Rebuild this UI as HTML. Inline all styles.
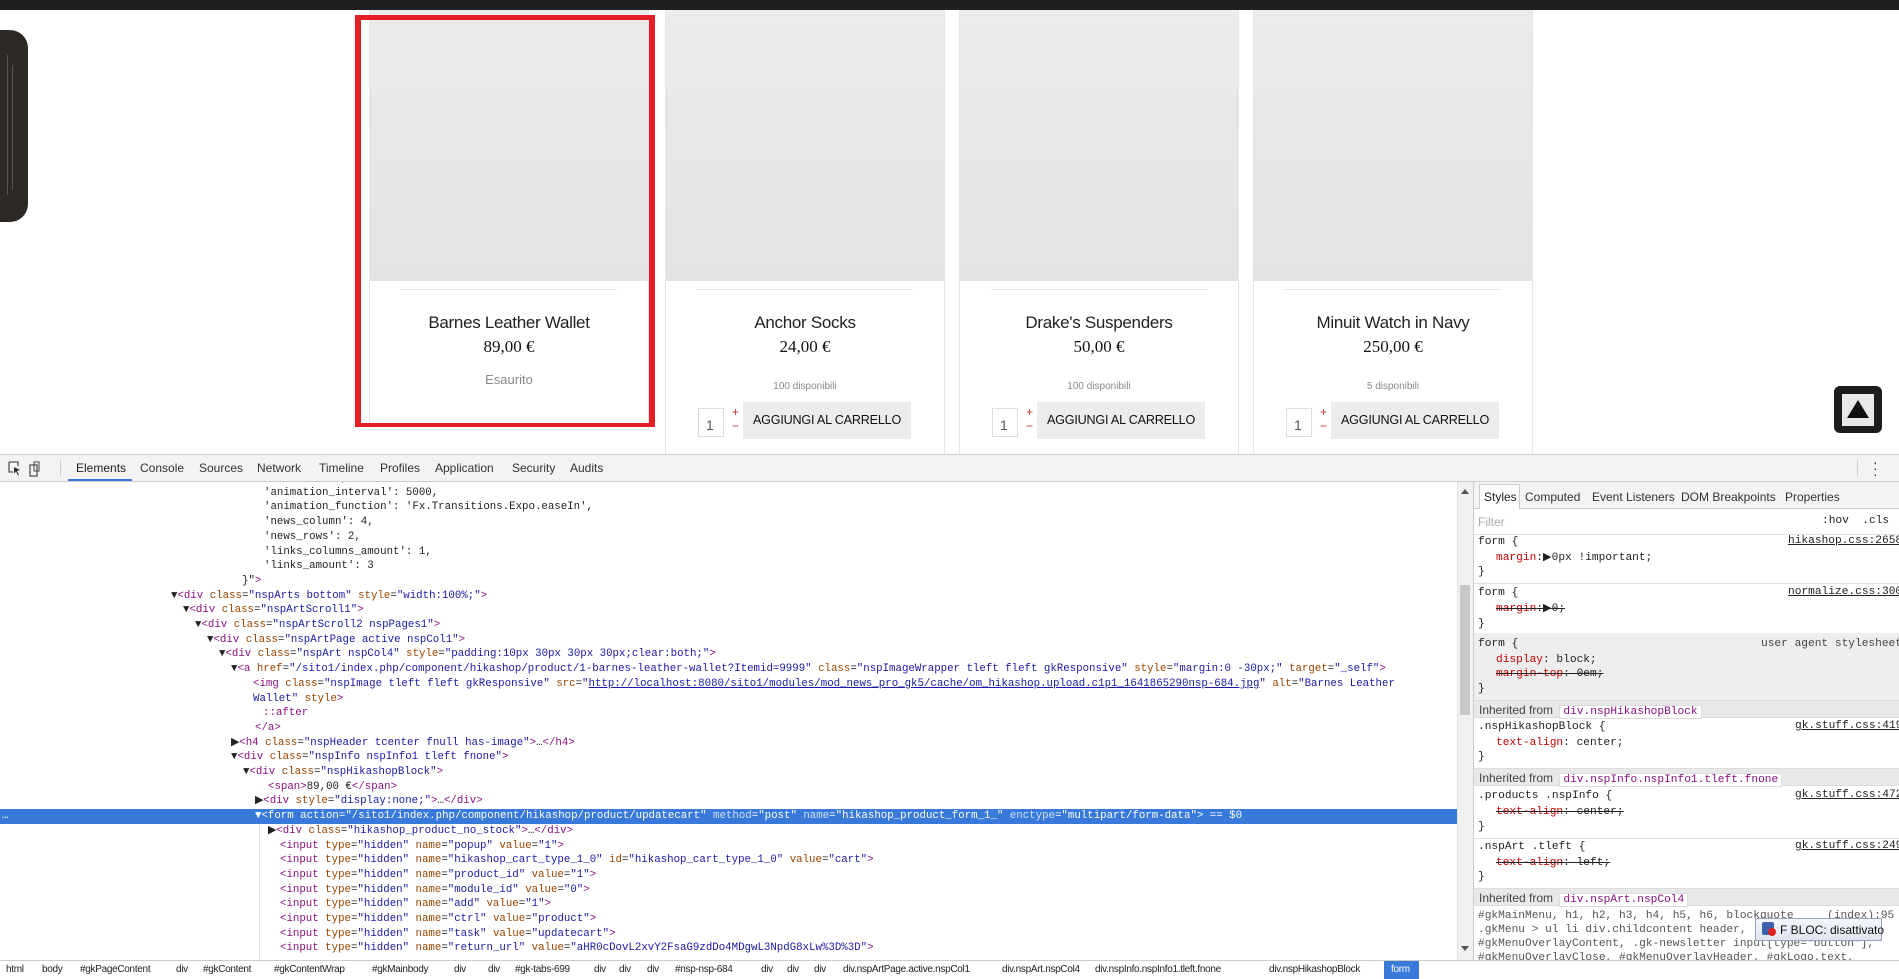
<!DOCTYPE html>
<html><head><meta charset="utf-8">
<style>
*{box-sizing:border-box;margin:0;padding:0}
body{width:1899px;height:979px;overflow:hidden;position:relative;background:#fff;font-family:"Liberation Sans",sans-serif}
.abs{position:absolute}
.card{position:absolute;top:10px;width:280px;height:420px;border:1px solid #e6e6e6;border-top:none;background:#fff}
.card .img{position:absolute;left:0;top:0;right:0;height:271px;background:linear-gradient(#ebebeb,#e3e3e3)}
.card .sep{position:absolute;left:31px;right:31px;top:279px;height:1px;background:#e3e3e3}
.card .ti{position:absolute;left:0;right:0;top:302px;text-align:center;font-family:"Liberation Sans Narrow","Liberation Sans",sans-serif;font-size:17px;color:#222;line-height:22px;letter-spacing:-0.3px}
.card .pr{position:absolute;left:0;right:0;top:326px;text-align:center;font-family:"Liberation Serif",serif;font-size:17px;color:#111;line-height:22px}
.card .st{position:absolute;left:0;right:0;top:371px;text-align:center;font-family:"Liberation Sans Narrow","Liberation Sans",sans-serif;font-size:10px;color:#888}
.qty{position:absolute;top:398px;width:26px;height:29px;border:1px solid #ddd;font-size:14px;color:#555;padding:8px 0 0 7px;background:#fff}
.pm{position:absolute;top:395px;color:#c33;font-size:12px;line-height:14px}
.btn{position:absolute;top:392px;width:168px;height:37px;background:#ececec;font-family:"Liberation Sans Narrow","Liberation Sans",sans-serif;font-size:12.6px;color:#111;text-align:center;line-height:37px;letter-spacing:-0.2px}
.code{position:absolute;left:0;top:0;font-family:"Liberation Mono",monospace;font-size:10.75px;white-space:pre;line-height:14.7px;color:#222}
.ln{position:absolute;height:14.7px;white-space:pre}
.t{color:#881280}.an{color:#994500}.av{color:#1a1aa6}.u{text-decoration:underline;color:#1a1aa6}
.tb{position:absolute;top:461px;font-size:12px;color:#333}
.rp{position:absolute;font-family:"Liberation Mono",monospace;font-size:11.2px;color:#222;white-space:pre;line-height:15px}
.red{color:#c80000}
.s{text-decoration:line-through}
.src{position:absolute;left:1788px;font-family:"Liberation Mono",monospace;font-size:11.2px;color:#222;text-decoration:underline;white-space:pre}
.inh{position:absolute;left:1474px;width:425px;height:18px;background:#e8e8e8;font-size:12px;color:#444;padding:2px 0 0 5px;border-top:1px solid #ddd;border-bottom:1px solid #ddd}
.inh b{font-weight:normal;font-family:"Liberation Mono",monospace;font-size:11.2px;color:#881280;background:#fff;border:1px solid #ddd;padding:0 3px;margin-left:3px}
.bc{position:absolute;top:964px;font-size:10px;color:#222;font-family:"Liberation Sans Narrow","Liberation Sans",sans-serif;letter-spacing:-0.3px;white-space:nowrap}
</style></head><body>
<div class="abs" style="left:0;top:0;width:1899px;height:10px;background:#1e1f21"></div>
<div class="abs" style="left:-12px;top:30px;width:40px;height:192px;background:#2d2a25;border-radius:0 18px 18px 0"></div>
<div class="abs" style="left:7px;top:55px;width:1px;height:140px;background:#555"></div>
<div class="abs" style="left:12px;top:65px;width:1px;height:125px;background:#555"></div>

<div class="card" style="left:369px"><div class="img"></div><div class="sep"></div><div class="ti">Barnes Leather Wallet</div><div class="pr">89,00 €</div><div class="st" style="top:362px;font-size:13px">Esaurito</div></div>
<div class="card" style="left:665px;height:460px"><div class="img"></div><div class="sep"></div><div class="ti">Anchor Socks</div><div class="pr">24,00 €</div><div class="st">100 disponibili</div>
<div class="qty" style="left:32px">1</div><div class="pm" style="left:66px">+<br>−</div><div class="btn" style="left:77px">AGGIUNGI AL CARRELLO</div></div>
<div class="card" style="left:959px;height:460px"><div class="img"></div><div class="sep"></div><div class="ti">Drake's Suspenders</div><div class="pr">50,00 €</div><div class="st">100 disponibili</div>
<div class="qty" style="left:32px">1</div><div class="pm" style="left:66px">+<br>−</div><div class="btn" style="left:77px">AGGIUNGI AL CARRELLO</div></div>
<div class="card" style="left:1253px;height:460px"><div class="img"></div><div class="sep"></div><div class="ti">Minuit Watch in Navy</div><div class="pr">250,00 €</div><div class="st">5 disponibili</div>
<div class="qty" style="left:32px">1</div><div class="pm" style="left:66px">+<br>−</div><div class="btn" style="left:77px">AGGIUNGI AL CARRELLO</div></div>
<div class="abs" style="left:355px;top:15px;width:300px;height:412px;border:5px solid #e31e25;border-width:5px 6px 4px 6px"></div>

<div class="abs" style="left:1834px;top:386px;width:48px;height:47px;background:#1c1c1c;border-radius:6px"></div>
<div class="abs" style="left:1842px;top:394px;width:32px;height:32px;background:#e8e8e8"></div>
<div class="abs" style="left:1847px;top:400px;width:0;height:0;border-left:11px solid transparent;border-right:11px solid transparent;border-bottom:18px solid #111"></div>

<!-- devtools code area -->
<div class="abs" style="left:0;top:482px;width:1457px;height:478px;background:#fff;overflow:hidden">
<div class="code" style="top:-11px">
<div class="ln" style="left:264px;top:0">'animation_speed': 400,</div>
<div class="ln" style="left:264px;top:14.7px">'animation_interval': 5000,</div>
<div class="ln" style="left:264px;top:29.4px">'animation_function': 'Fx.Transitions.Expo.easeIn',</div>
<div class="ln" style="left:264px;top:44.1px">'news_column': 4,</div>
<div class="ln" style="left:264px;top:58.8px">'news_rows': 2,</div>
<div class="ln" style="left:264px;top:73.5px">'links_columns_amount': 1,</div>
<div class="ln" style="left:264px;top:88.2px">'links_amount': 3</div>
<div class="ln" style="left:242px;top:102.9px">}"<span class="t">&gt;</span></div>
<div class="ln" style="left:171px;top:117.6px">▼<span class="t">&lt;div</span> <span class="an">class</span>=<span class="av">"nspArts bottom"</span> <span class="an">style</span>=<span class="av">"width:100%;"</span><span class="t">&gt;</span></div>
<div class="ln" style="left:183px;top:132.3px">▼<span class="t">&lt;div</span> <span class="an">class</span>=<span class="av">"nspArtScroll1"</span><span class="t">&gt;</span></div>
<div class="ln" style="left:195px;top:147px">▼<span class="t">&lt;div</span> <span class="an">class</span>=<span class="av">"nspArtScroll2 nspPages1"</span><span class="t">&gt;</span></div>
<div class="ln" style="left:207px;top:161.7px">▼<span class="t">&lt;div</span> <span class="an">class</span>=<span class="av">"nspArtPage active nspCol1"</span><span class="t">&gt;</span></div>
<div class="ln" style="left:219px;top:176.4px">▼<span class="t">&lt;div</span> <span class="an">class</span>=<span class="av">"nspArt nspCol4"</span> <span class="an">style</span>=<span class="av">"padding:10px 30px 30px 30px;clear:both;"</span><span class="t">&gt;</span></div>
<div class="ln" style="left:231px;top:191.1px">▼<span class="t">&lt;a</span> <span class="an">href</span>=<span class="av">"/sito1/index.php/component/hikashop/product/1-barnes-leather-wallet?Itemid=9999"</span> <span class="an">class</span>=<span class="av">"nspImageWrapper tleft fleft gkResponsive"</span> <span class="an">style</span>=<span class="av">"margin:0 -30px;"</span> <span class="an">target</span>=<span class="av">"_self"</span><span class="t">&gt;</span></div>
<div class="ln" style="left:253px;top:205.8px"><span class="t">&lt;img</span> <span class="an">class</span>=<span class="av">"nspImage tleft fleft gkResponsive"</span> <span class="an">src</span>=<span class="av">"</span><span class="u">http://localhost:8080/sito1/modules/mod_news_pro_gk5/cache/om_hikashop.upload.c1p1_1641865290nsp-684.jpg</span><span class="av">"</span> <span class="an">alt</span>=<span class="av">"Barnes Leather</span></div>
<div class="ln" style="left:253px;top:220.5px"><span class="av">Wallet"</span> <span class="an">style</span><span class="t">&gt;</span></div>
<div class="ln" style="left:263px;top:235.2px"><span class="t">::after</span></div>
<div class="ln" style="left:255px;top:249.9px"><span class="t">&lt;/a&gt;</span></div>
<div class="ln" style="left:231px;top:264.6px">▶<span class="t">&lt;h4</span> <span class="an">class</span>=<span class="av">"nspHeader tcenter fnull has-image"</span><span class="t">&gt;</span>…<span class="t">&lt;/h4&gt;</span></div>
<div class="ln" style="left:231px;top:279.3px">▼<span class="t">&lt;div</span> <span class="an">class</span>=<span class="av">"nspInfo nspInfo1 tleft fnone"</span><span class="t">&gt;</span></div>
<div class="ln" style="left:243px;top:294px">▼<span class="t">&lt;div</span> <span class="an">class</span>=<span class="av">"nspHikashopBlock"</span><span class="t">&gt;</span></div>
<div class="ln" style="left:268px;top:308.7px"><span class="t">&lt;span&gt;</span>89,00 €<span class="t">&lt;/span&gt;</span></div>
<div class="ln" style="left:255px;top:323.4px">▶<span class="t">&lt;div</span> <span class="an">style</span>=<span class="av">"display:none;"</span><span class="t">&gt;</span>…<span class="t">&lt;/div&gt;</span></div>
<div class="ln" style="left:-300px;top:338.1px;width:1757px;background:#3879d9;color:#fff;padding-left:300px"><span style="position:absolute;left:302px">…</span><span style="position:absolute;left:555px">▼&lt;form action="/sito1/index.php/component/hikashop/product/updatecart" <span style="color:#cfe0ff">method</span>="post" <span style="color:#cfe0ff">name</span>="hikashop_product_form_1_" <span style="color:#cfe0ff">enctype</span>="multipart/form-data"&gt; == $0</span></div>
<div class="ln" style="left:268px;top:352.8px">▶<span class="t">&lt;div</span> <span class="an">class</span>=<span class="av">"hikashop_product_no_stock"</span><span class="t">&gt;</span>…<span class="t">&lt;/div&gt;</span></div>
<div class="ln" style="left:280px;top:367.5px"><span class="t">&lt;input</span> <span class="an">type</span>=<span class="av">"hidden"</span> <span class="an">name</span>=<span class="av">"popup"</span> <span class="an">value</span>=<span class="av">"1"</span><span class="t">&gt;</span></div>
<div class="ln" style="left:280px;top:382.2px"><span class="t">&lt;input</span> <span class="an">type</span>=<span class="av">"hidden"</span> <span class="an">name</span>=<span class="av">"hikashop_cart_type_1_0"</span> <span class="an">id</span>=<span class="av">"hikashop_cart_type_1_0"</span> <span class="an">value</span>=<span class="av">"cart"</span><span class="t">&gt;</span></div>
<div class="ln" style="left:280px;top:396.9px"><span class="t">&lt;input</span> <span class="an">type</span>=<span class="av">"hidden"</span> <span class="an">name</span>=<span class="av">"product_id"</span> <span class="an">value</span>=<span class="av">"1"</span><span class="t">&gt;</span></div>
<div class="ln" style="left:280px;top:411.6px"><span class="t">&lt;input</span> <span class="an">type</span>=<span class="av">"hidden"</span> <span class="an">name</span>=<span class="av">"module_id"</span> <span class="an">value</span>=<span class="av">"0"</span><span class="t">&gt;</span></div>
<div class="ln" style="left:280px;top:426.3px"><span class="t">&lt;input</span> <span class="an">type</span>=<span class="av">"hidden"</span> <span class="an">name</span>=<span class="av">"add"</span> <span class="an">value</span>=<span class="av">"1"</span><span class="t">&gt;</span></div>
<div class="ln" style="left:280px;top:441px"><span class="t">&lt;input</span> <span class="an">type</span>=<span class="av">"hidden"</span> <span class="an">name</span>=<span class="av">"ctrl"</span> <span class="an">value</span>=<span class="av">"product"</span><span class="t">&gt;</span></div>
<div class="ln" style="left:280px;top:455.7px"><span class="t">&lt;input</span> <span class="an">type</span>=<span class="av">"hidden"</span> <span class="an">name</span>=<span class="av">"task"</span> <span class="an">value</span>=<span class="av">"updatecart"</span><span class="t">&gt;</span></div>
<div class="ln" style="left:280px;top:470.4px"><span class="t">&lt;input</span> <span class="an">type</span>=<span class="av">"hidden"</span> <span class="an">name</span>=<span class="av">"return_url"</span> <span class="an">value</span>=<span class="av">"aHR0cDovL2xvY2FsaG9zdDo4MDgwL3NpdG8xLw%3D%3D"</span><span class="t">&gt;</span></div>
</div>
<div class="abs" style="left:259px;top:342px;width:1px;height:140px;background:#ddd"></div>
</div>

<!-- toolbar -->
<div class="abs" style="left:0;top:454px;width:1899px;height:28px;background:#f3f3f3;border-top:1px solid #ccc;border-bottom:1px solid #ccc"></div>
<svg class="abs" style="left:8px;top:461px" width="34" height="16" viewBox="0 0 34 16"><path d="M1 1h9v4M1 1v10h4" fill="none" stroke="#555" stroke-width="1.3"/><path d="M6 6l6 3-3 1 2 4-1 .5-2-4-2 2z" fill="#333"/><rect x="22" y="4" width="7" height="11" fill="none" stroke="#555" stroke-width="1.3"/><rect x="26" y="1" width="5" height="9" fill="none" stroke="#555" stroke-width="1.1"/></svg>
<div class="abs" style="left:60px;top:460px;width:1px;height:16px;background:#ccc"></div>
<div class="tb" style="left:76px;color:#222">Elements</div>
<div class="abs" style="left:68px;top:479px;width:64px;height:2px;background:#3879d9"></div>
<div class="tb" style="left:140px">Console</div>
<div class="tb" style="left:199px">Sources</div>
<div class="tb" style="left:257px">Network</div>
<div class="tb" style="left:319px">Timeline</div>
<div class="tb" style="left:380px">Profiles</div>
<div class="tb" style="left:435px">Application</div>
<div class="tb" style="left:512px">Security</div>
<div class="tb" style="left:570px">Audits</div>
<div class="abs" style="left:1857px;top:460px;width:1px;height:16px;background:#ccc"></div>
<div class="abs" style="left:1873px;top:459px;font-size:14px;color:#333;line-height:6px">·<br>·<br>·</div>

<!-- scrollbar -->
<div class="abs" style="left:1457px;top:482px;width:16px;height:478px;background:#f1f1f1;border-left:1px solid #e2e2e2"></div>
<div class="abs" style="left:1460px;top:585px;width:10px;height:130px;background:#c8c8c8"></div>
<div class="abs" style="left:1461px;top:489px;border-left:4px solid transparent;border-right:4px solid transparent;border-bottom:5px solid #555"></div>
<div class="abs" style="left:1461px;top:946px;border-left:4px solid transparent;border-right:4px solid transparent;border-top:5px solid #555"></div>

<!-- right panel -->
<div class="abs" style="left:1473px;top:482px;width:426px;height:478px;background:#fff;border-left:1px solid #ccc"></div>
<div class="abs" style="left:1474px;top:482px;width:425px;height:27px;background:#f3f3f3;border-bottom:1px solid #ccc"></div>
<div class="abs" style="left:1479px;top:484px;width:41px;height:25px;background:#fff;border:1px solid #ccc;border-bottom:none"></div>
<div class="abs" style="left:1484px;top:490px;font-size:12px;color:#222">Styles</div>
<div class="abs" style="left:1525px;top:490px;font-size:12px;color:#333">Computed</div>
<div class="abs" style="left:1592px;top:490px;font-size:12px;color:#333">Event Listeners</div>
<div class="abs" style="left:1681px;top:490px;font-size:12px;color:#333">DOM Breakpoints</div>
<div class="abs" style="left:1785px;top:490px;font-size:12px;color:#333">Properties</div>
<div class="abs" style="left:1478px;top:515px;font-size:12px;color:#aaa">Filter</div>
<div class="rp" style="left:1822px;top:514px">:hov  .cls</div>
<div class="abs" style="left:1474px;top:534px;width:425px;height:1px;background:#e0e0e0"></div>

<div class="rp" style="left:1478px;top:535px">form {</div><div class="src" style="top:535px">hikashop.css:2658</div>
<div class="rp" style="left:1496px;top:551px"><span class="red">margin</span>:▶0px !important;</div>
<div class="rp" style="left:1478px;top:565px">}</div>
<div class="abs" style="left:1474px;top:583px;width:425px;height:1px;background:#e0e0e0"></div>
<div class="rp" style="left:1478px;top:586px">form {</div><div class="src" style="top:586px">normalize.css:300</div>
<div class="rp s" style="left:1496px;top:602px"><span class="red">margin</span>:▶0;</div>
<div class="rp" style="left:1478px;top:617px">}</div>
<div class="abs" style="left:1474px;top:633px;width:425px;height:67px;background:#eeeeee"></div>
<div class="rp" style="left:1478px;top:637px">form {</div><div class="rp" style="left:1761px;top:637px;color:#444">user agent stylesheet</div>
<div class="rp" style="left:1496px;top:653px"><span class="red">display</span>: block;</div>
<div class="rp s" style="left:1496px;top:667px"><span class="red">margin-top</span>: 0em;</div>
<div class="rp" style="left:1478px;top:682px">}</div>
<div class="inh" style="top:700px">Inherited from <b>div.nspHikashopBlock</b></div>
<div class="rp" style="left:1478px;top:720px">.nspHikashopBlock {</div><div class="src" style="left:1795px;top:720px">gk.stuff.css:419</div>
<div class="rp" style="left:1496px;top:736px"><span class="red">text-align</span>: center;</div>
<div class="rp" style="left:1478px;top:750px">}</div>
<div class="inh" style="top:768px">Inherited from <b>div.nspInfo.nspInfo1.tleft.fnone</b></div>
<div class="rp" style="left:1478px;top:789px">.products .nspInfo {</div><div class="src" style="left:1795px;top:789px">gk.stuff.css:472</div>
<div class="rp s" style="left:1496px;top:805px"><span class="red">text-align</span>: center;</div>
<div class="rp" style="left:1478px;top:820px">}</div>
<div class="abs" style="left:1474px;top:838px;width:425px;height:1px;background:#e0e0e0"></div>
<div class="rp" style="left:1478px;top:840px">.nspArt .tleft {</div><div class="src" style="left:1795px;top:840px">gk.stuff.css:249</div>
<div class="rp s" style="left:1496px;top:856px"><span class="red">text-align</span>: left;</div>
<div class="rp" style="left:1478px;top:870px">}</div>
<div class="inh" style="top:888px">Inherited from <b>div.nspArt.nspCol4</b></div>
<div class="rp" style="left:1478px;top:909px;color:#555;line-height:14px">#gkMainMenu, h1, h2, h3, h4, h5, h6, blockquote     (index):95
.gkMenu &gt; ul li div.childcontent header, .
#gkMenuOverlayContent, .gk-newsletter input[type="button"],
#gkMenuOverlayClose, #gkMenuOverlayHeader, #gkLogo.text,
.gkIsWrapper-gk_storefront figcaption, .product-price</div>
<div class="abs" style="left:1755px;top:918px;width:127px;height:23px;background:linear-gradient(#f4f6fb,#dfe4ee);border:1px solid #9aa5b8;font-size:12px;color:#111;padding:4px 0 0 24px;white-space:nowrap">F BLOC: disattivato</div>
<div class="abs" style="left:1762px;top:922px;width:12px;height:13px;background:#3a62b0;border-radius:2px"></div>
<div class="abs" style="left:1768px;top:928px;width:8px;height:8px;background:#e02020;border-radius:50%"></div>

<!-- breadcrumb -->
<div class="abs" style="left:0;top:960px;width:1899px;height:19px;background:#fff;border-top:1px solid #ccc"></div>
<div class="bc" style="left:6px">html</div>
<div class="bc" style="left:42px">body</div>
<div class="bc" style="left:80px">#gkPageContent</div>
<div class="bc" style="left:176px">div</div>
<div class="bc" style="left:203px">#gkContent</div>
<div class="bc" style="left:274px">#gkContentWrap</div>
<div class="bc" style="left:372px">#gkMainbody</div>
<div class="bc" style="left:454px">div</div>
<div class="bc" style="left:488px">div</div>
<div class="bc" style="left:515px">#gk-tabs-699</div>
<div class="bc" style="left:594px">div</div>
<div class="bc" style="left:619px">div</div>
<div class="bc" style="left:647px">div</div>
<div class="bc" style="left:675px">#nsp-nsp-684</div>
<div class="bc" style="left:761px">div</div>
<div class="bc" style="left:787px">div</div>
<div class="bc" style="left:814px">div</div>
<div class="bc" style="left:843px">div.nspArtPage.active.nspCol1</div>
<div class="bc" style="left:1002px">div.nspArt.nspCol4</div>
<div class="bc" style="left:1095px">div.nspInfo.nspInfo1.tleft.fnone</div>
<div class="bc" style="left:1269px">div.nspHikashopBlock</div>
<div class="abs" style="left:1384px;top:961px;width:35px;height:18px;background:#3879d9"></div>
<div class="bc" style="left:1391px;color:#fff">form</div>
</body></html>
